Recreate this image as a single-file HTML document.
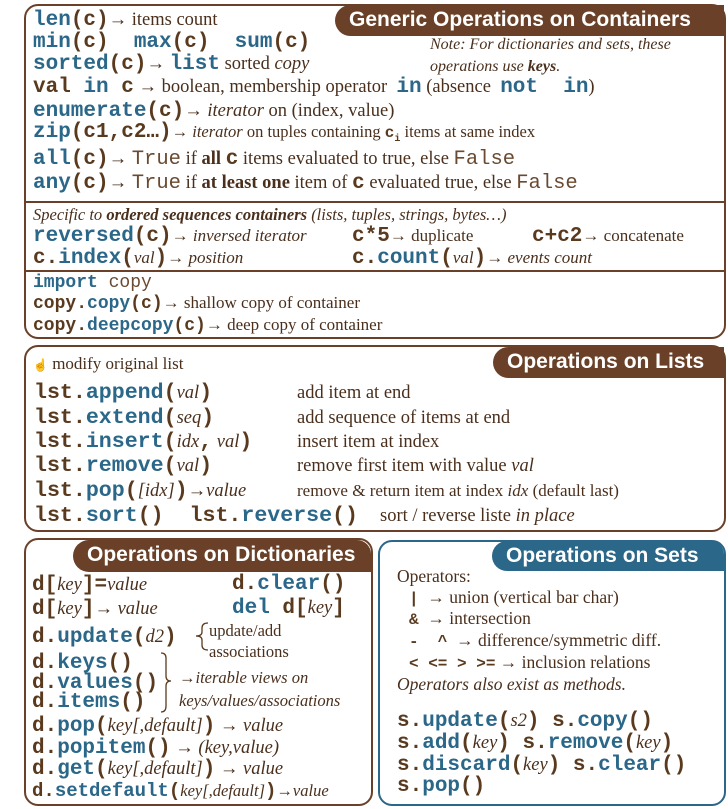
<!DOCTYPE html>
<html><head><meta charset="utf-8"><style>
body{margin:0;width:728px;height:809px;background:#fff;position:relative;overflow:hidden;font-family:"Liberation Serif",serif;color:#4a2f1c;font-size:18.5px}
.p{position:absolute;border:2px solid #6a4128;border-radius:14px;box-sizing:border-box}
.h{position:absolute;background:#6a4128;color:#fff;font-family:"Liberation Sans",sans-serif;font-weight:bold;font-size:21px;border-radius:16px 0 0 16px;padding-left:14px;box-sizing:border-box;line-height:30px}
.l{position:absolute;white-space:pre;line-height:24px}
.m{font-family:"Liberation Mono",monospace;font-weight:bold;font-size:21px;color:#5a3a1e}
.L .m{font-size:21.6px}
.b{color:#2b6788}
i{font-style:italic}
.t{font-family:"Liberation Mono",monospace;color:#6a4a30;font-size:20.5px}
.sep{position:absolute;height:2px;background:#6a4128}
</style></head><body>
<!-- panel 1 -->
<div class="p" style="left:24px;top:4px;width:702px;height:335px"></div>
<div class="h" style="left:335px;top:5px;width:389px;height:31px">Generic Operations on Containers</div>
<div class="l" style="left:33px;top:8px"><span class="m b">len</span><span class="m">(c)</span>→ items count</div>
<div class="l" style="left:33px;top:30px"><span class="m b">min</span><span class="m">(c)  </span><span class="m b">max</span><span class="m">(c)  </span><span class="m b">sum</span><span class="m">(c)</span></div>
<div class="l" style="left:430px;top:34px;font-size:16px;line-height:22px"><i>Note: For dictionaries and sets, these<br>operations use <b>keys</b>.</i></div>
<div class="l" style="left:33px;top:52px"><span class="m b">sorted</span><span class="m">(c)</span>→ <span class="m b">list</span> sorted <i>copy</i></div>
<div class="l" style="left:33px;top:75px"><span class="m">val </span><span class="m b">in</span><span class="m"> c</span> → boolean, membership operator  <span class="m b">in</span> (absence  <span class="m b">not  in</span>)</div>
<div class="l" style="left:33px;top:99px"><span class="m b">enumerate</span><span class="m">(c)</span>→ <i>iterator</i> on (index, value)</div>
<div class="l" style="left:33px;top:120px"><span class="m b">zip</span><span class="m">(c1,c2…)</span><span style="font-size:16.5px">→ <i>iterator</i> on tuples containing <span class="m" style="font-size:16px">c<sub style="font-size:10px">i</sub></span> items at same index</span></div>
<div class="l" style="left:33px;top:147px"><span class="m b">all</span><span class="m">(c)</span>→ <span class="t">True</span> if <b>all <span class="m">c</span></b> items evaluated to true, else <span class="t">False</span></div>
<div class="l" style="left:33px;top:171px"><span class="m b">any</span><span class="m">(c)</span>→ <span class="t">True</span> if <b>at least one</b> item of <span class="m">c</span> evaluated true, else <span class="t">False</span></div>
<div class="sep" style="left:26px;top:201px;width:698px"></div>
<div class="l" style="left:33px;top:203px;font-size:16.5px"><i>Specific to <b>ordered sequences containers</b> (lists, tuples, strings, bytes…)</i></div>
<div class="l" style="left:33px;top:224px"><span class="m b">reversed</span><span class="m">(c)</span><span style="font-size:17px">→ <i>inversed iterator</i></span></div>
<div class="l" style="left:352px;top:224px;font-size:17px"><span class="m">c*5</span>→ duplicate</div>
<div class="l" style="left:532px;top:224px;font-size:17px"><span class="m">c+c2</span>→ concatenate</div>
<div class="l" style="left:33px;top:246px;font-size:17px"><span class="m">c.</span><span class="m b">index</span><span class="m">(</span><i>val</i><span class="m">)</span>→ <i>position</i></div>
<div class="l" style="left:352px;top:246px;font-size:17px"><span class="m">c.</span><span class="m b">count</span><span class="m">(</span><i>val</i><span class="m">)</span>→ <i>events count</i></div>
<div class="sep" style="left:26px;top:270px;width:698px"></div>
<div class="l" style="left:33px;top:270px;font-size:17px"><span class="m b" style="font-size:18px">import</span><span class="t" style="font-size:18px"> copy</span></div>
<div class="l" style="left:33px;top:291px;font-size:17px"><span class="m" style="font-size:18px">copy.</span><span class="m b" style="font-size:18px">copy</span><span class="m" style="font-size:18px">(c)</span>→ shallow copy of container</div>
<div class="l" style="left:33px;top:313px;font-size:17px"><span class="m" style="font-size:18px">copy.</span><span class="m b" style="font-size:18px">deepcopy</span><span class="m" style="font-size:18px">(c)</span>→ deep copy of container</div>
<!-- panel 2 -->
<div class="p" style="left:24px;top:345px;width:702px;height:187px"></div>
<div class="h" style="left:493px;top:347px;width:231px;height:31px">Operations on Lists</div>
<div class="l" style="left:33px;top:352px;font-size:17px"><span style="font-size:12px">☝</span> modify original list</div>
<div class="L">
<div class="l" style="left:34px;top:381px"><span class="m">lst.</span><span class="m b">append</span><span class="m">(</span><i>val</i><span class="m">)</span></div>
<div class="l" style="left:34px;top:406px"><span class="m">lst.</span><span class="m b">extend</span><span class="m">(</span><i>seq</i><span class="m">)</span></div>
<div class="l" style="left:34px;top:430px"><span class="m">lst.</span><span class="m b">insert</span><span class="m">(</span><i>idx</i><span class="m">,</span> <i>val</i><span class="m">)</span></div>
<div class="l" style="left:34px;top:454px"><span class="m">lst.</span><span class="m b">remove</span><span class="m">(</span><i>val</i><span class="m">)</span></div>
<div class="l" style="left:34px;top:479px"><span class="m">lst.</span><span class="m b">pop</span><span class="m">(</span><i>[idx]</i><span class="m">)</span>→<i>value</i></div>
<div class="l" style="left:34px;top:504px"><span class="m">lst.</span><span class="m b">sort</span><span class="m">()  lst.</span><span class="m b">reverse</span><span class="m">()</span></div>
</div>
<div class="l" style="left:297px;top:381px">add item at end</div>
<div class="l" style="left:297px;top:406px">add sequence of items at end</div>
<div class="l" style="left:297px;top:430px">insert item at index</div>
<div class="l" style="left:297px;top:454px">remove first item with value <i>val</i></div>
<div class="l" style="left:297px;top:479px;font-size:17px">remove &amp; return item at index <i>idx</i> (default last)</div>
<div class="l" style="left:380px;top:504px">sort / reverse liste <i>in place</i></div>
<!-- panel 3 -->
<div class="p" style="left:24px;top:538px;width:349px;height:268px"></div>
<div class="h" style="left:73px;top:540px;width:298px;height:32px;border-radius:16px 14px 0 16px">Operations on Dictionaries</div>
<div class="l" style="left:32px;top:573px"><span class="m">d[</span><i>key</i><span class="m">]=</span><i>value</i></div>
<div class="l" style="left:32px;top:597px"><span class="m">d[</span><i>key</i><span class="m">]</span>→ <i>value</i></div>
<div class="l" style="left:232px;top:572px"><span class="m">d.</span><span class="m b">clear</span><span class="m">()</span></div>
<div class="l" style="left:232px;top:596px"><span class="m b">del</span><span class="m"> d[</span><i>key</i><span class="m">]</span></div>
<div class="l" style="left:32px;top:625px"><span class="m">d.</span><span class="m b">update</span><span class="m">(</span><i>d2</i><span class="m">)</span></div>
<svg style="position:absolute;left:0;top:0" width="728" height="809"><g fill="none" stroke="#5a3a1e" stroke-width="1.3">
<path d="M208 623 Q202 623 202 628 L202 632 Q202 636 196 636 Q202 636 202 640 L202 645 Q202 650 208 650"/>
<path d="M161 653 Q166 653 166 658 L166 676 Q166 681 171 681 Q166 681 166 686 L166 706 Q166 712 161 712"/>
</g></svg>
<div class="l" style="left:209px;top:620px;font-size:16.5px;line-height:21px">update/add<br>associations</div>
<div class="l" style="left:32px;top:654px;line-height:19.5px"><span class="m">d.</span><span class="m b">keys</span><span class="m">()</span><br><span class="m">d.</span><span class="m b">values</span><span class="m">()</span><br><span class="m">d.</span><span class="m b">items</span><span class="m">()</span></div>
<div class="l" style="left:179px;top:666px;font-size:16.5px;line-height:23px"><i>→iterable views on<br>keys/values/associations</i></div>
<div class="l" style="left:32px;top:714px"><span class="m">d.</span><span class="m b">pop</span><span class="m">(</span><i>key[,default]</i><span class="m">)</span> → <i>value</i></div>
<div class="l" style="left:32px;top:736px"><span class="m">d.</span><span class="m b">popitem</span><span class="m">()</span> → <i>(key,value)</i></div>
<div class="l" style="left:32px;top:757px"><span class="m">d.</span><span class="m b">get</span><span class="m">(</span><i>key[,default]</i><span class="m">)</span> → <i>value</i></div>
<div class="l" style="left:32px;top:779px;font-size:16.5px"><span class="m" style="font-size:19px">d.</span><span class="m b" style="font-size:19px">setdefault</span><span class="m" style="font-size:19px">(</span><i>key[,default]</i><span class="m" style="font-size:19px">)</span>→<i>value</i></div>
<!-- panel 4 -->
<div class="p" style="left:378px;top:540px;width:348px;height:266px;border-color:#2b6788"></div>
<div class="h" style="left:492px;top:541px;width:232px;height:30px;background:#2b6788;border-radius:16px 14px 0 16px">Operations on Sets</div>
<div class="l" style="left:397px;top:564px;font-size:17.5px">Operators:</div>
<div class="l" style="left:409px;top:585px;font-size:17.5px"><span class="m" style="font-size:16px">|</span>  → union (vertical bar char)</div>
<div class="l" style="left:409px;top:606px;font-size:17.5px"><span class="m" style="font-size:16px">&amp;</span>  → intersection</div>
<div class="l" style="left:409px;top:628px;font-size:17.5px"><span class="m" style="font-size:16px">-  ^</span>  → difference/symmetric diff.</div>
<div class="l" style="left:409px;top:650px;font-size:17.5px"><span class="m" style="font-size:16px">&lt; &lt;= &gt; &gt;=</span> → inclusion relations</div>
<div class="l" style="left:397px;top:672px;font-size:17.5px"><i>Operators also exist as methods.</i></div>
<div class="l" style="left:397px;top:709px"><span class="m">s.</span><span class="m b">update</span><span class="m">(</span><i>s2</i><span class="m">) s.</span><span class="m b">copy</span><span class="m">()</span></div>
<div class="l" style="left:397px;top:731px"><span class="m">s.</span><span class="m b">add</span><span class="m">(</span><i>key</i><span class="m">) s.</span><span class="m b">remove</span><span class="m">(</span><i>key</i><span class="m">)</span></div>
<div class="l" style="left:397px;top:753px"><span class="m">s.</span><span class="m b">discard</span><span class="m">(</span><i>key</i><span class="m">) s.</span><span class="m b">clear</span><span class="m">()</span></div>
<div class="l" style="left:397px;top:774px"><span class="m">s.</span><span class="m b">pop</span><span class="m">()</span></div>
</body></html>
